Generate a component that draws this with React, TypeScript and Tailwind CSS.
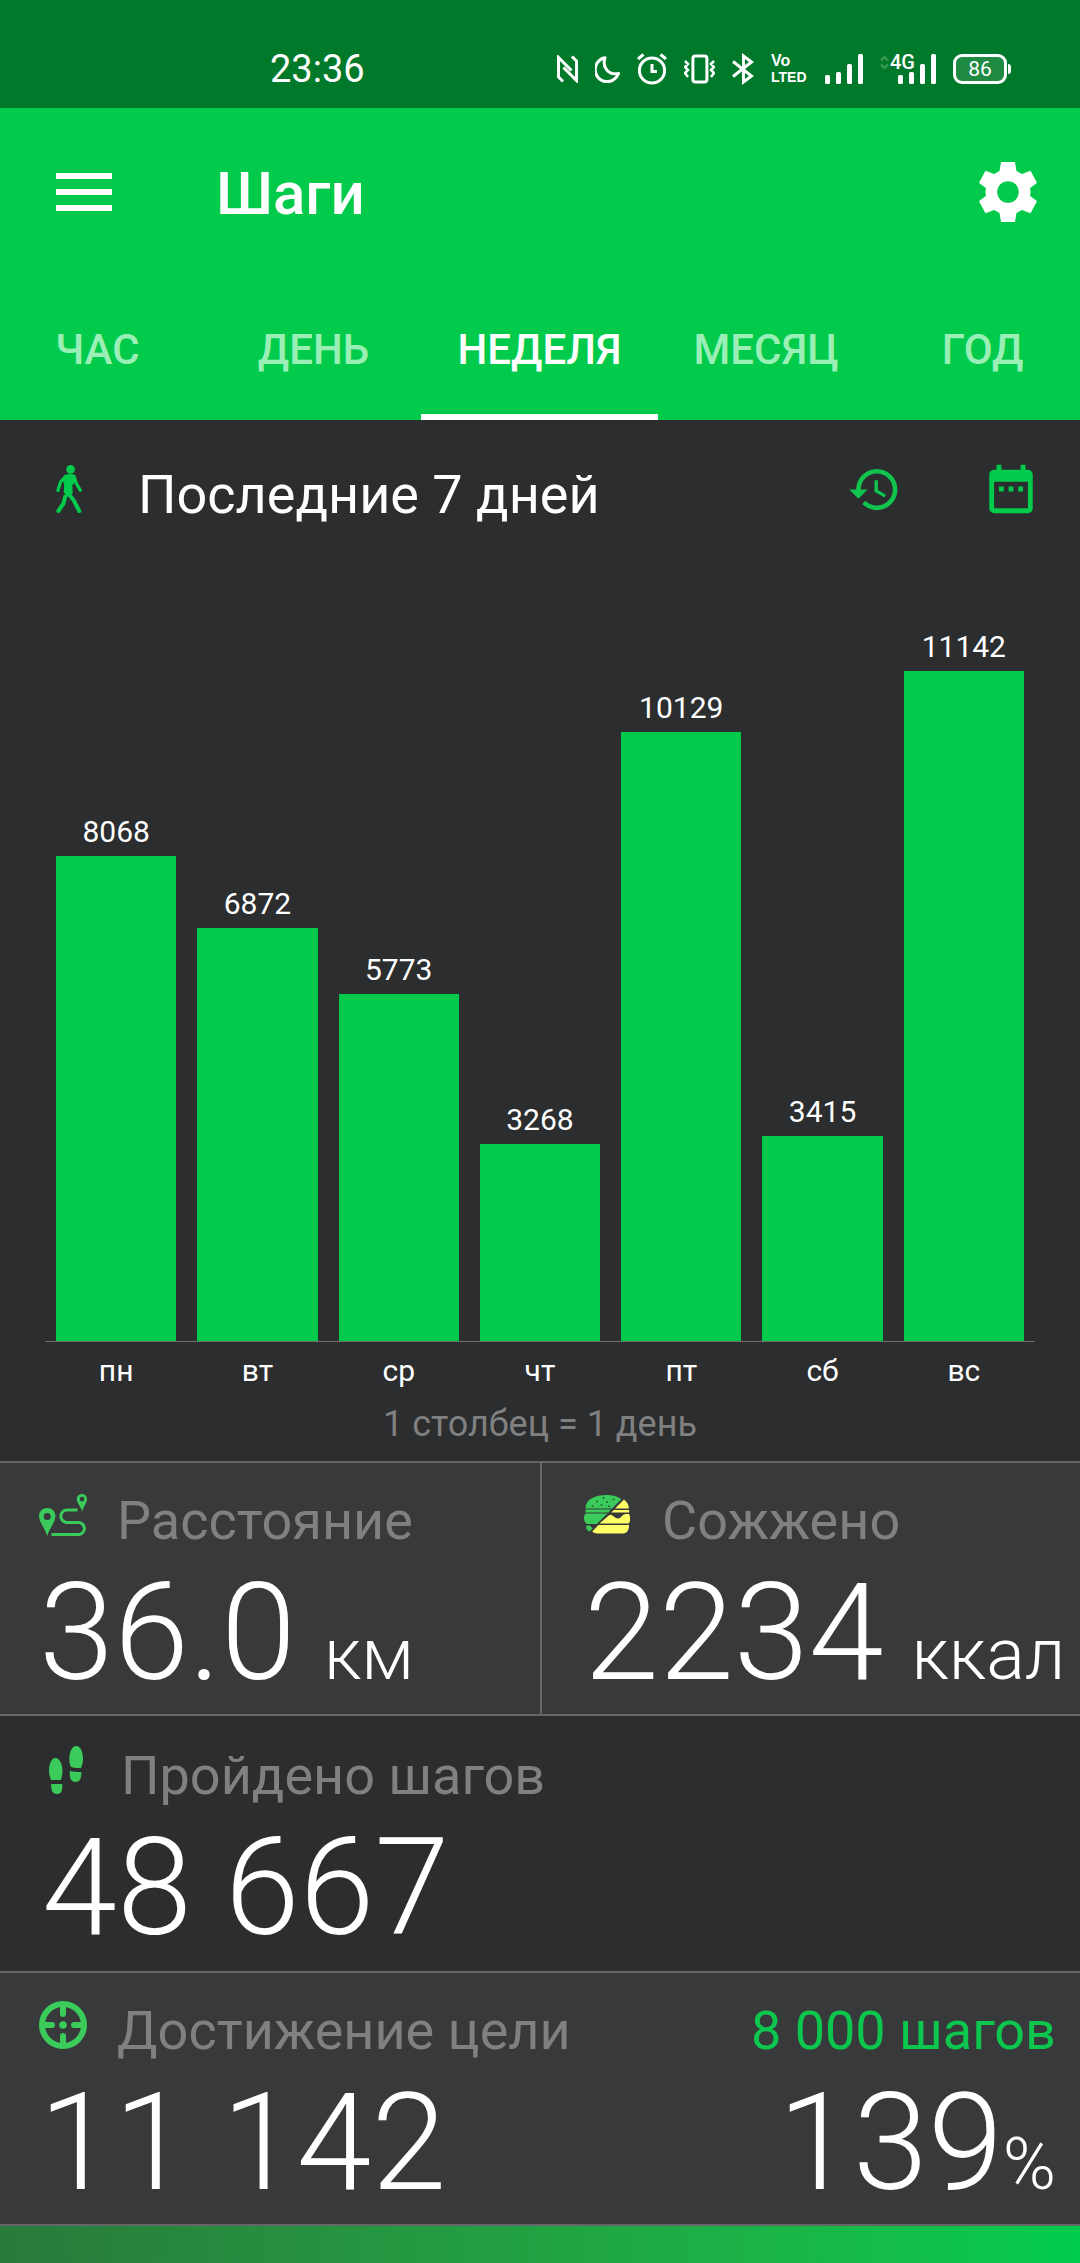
import { MdDateRange, MdHistory } from "react-icons/md";

const tabs = ["ЧАС", "ДЕНЬ", "НЕДЕЛЯ", "МЕСЯЦ", "ГОД"];

const days = [
  { name: "пн", steps: 8068 },
  { name: "вт", steps: 6872 },
  { name: "ср", steps: 5773 },
  { name: "чт", steps: 3268 },
  { name: "пт", steps: 10129 },
  { name: "сб", steps: 3415 },
  { name: "вс", steps: 11142 },
];

const MAX_STEPS = 11142;
const MAX_BAR = 670;

const SignalBars = () => (
  <svg width="38" height="30" viewBox="0 0 38 30" fill="#fff">
    <rect x="0" y="21" width="5" height="9" rx="1.5" />
    <rect x="11" y="18" width="5" height="12" rx="1.5" />
    <rect x="22" y="10" width="5" height="20" rx="1.5" />
    <rect x="33" y="0" width="5" height="30" rx="1.5" />
  </svg>
);

const StatusBar = () => {
  return (
    <div className="flex h-[108px] items-center bg-[#00792b] pt-[30px] pr-[69px] pl-[270px] text-white">
      <span className="text-[38px] leading-[44px]">23:36</span>
      <div className="ml-auto flex items-center gap-[17px]">
        {/* nfc */}
        <svg width="21" height="28" viewBox="0 0 21 28" fill="none" stroke="#fff" strokeWidth="3">
          <path d="M6 26.500L1.500 22V2.500L14.500 15.500" />
          <path d="M15 1.500L19.500 6V25.500L6.500 12.500" />
        </svg>
        {/* do not disturb */}
        <svg width="25" height="27" viewBox="0 0 25 27" fill="none" stroke="#fff" strokeWidth="3" strokeLinejoin="round">
          <path d="M10 1.800A12 12 0 1 0 23.500 17.500C13 19.500 7 11 10 1.800Z" />
        </svg>
        {/* alarm */}
        <svg width="30" height="32" viewBox="0 0 30 32" fill="none" stroke="#fff" strokeWidth="3">
          <circle cx="15" cy="17.500" r="12.600" />
          <path d="M15 11v7.500h5M1 6l5.500-4.500M29 6l-5.500-4.500" />
        </svg>
        {/* vibration */}
        <svg width="31" height="30" viewBox="0 0 31 30" fill="none" stroke="#fff" strokeWidth="3">
          <rect x="8.900" y="1.900" width="14" height="26.200" rx="2.500" />
          <path d="M1 7l3 3-3 3 3 3-3 3 3 4M30 7l-3 3 3 3-3 3 3 3-3 4" strokeWidth="2.500" />
        </svg>
        {/* bluetooth */}
        <svg width="22" height="32" viewBox="0 0 22 32" fill="none" stroke="#fff" strokeWidth="3">
          <path d="M1 8.500l18.500 14.500L11.500 29V3l8 6L1 23.500" />
        </svg>
        <div className="flex w-[37px] flex-col font-['Liberation_Sans',sans-serif] font-bold">
          <span className="text-[16px] leading-[17px]">Vo</span>
          <span className="text-[14px] leading-[17px]">LTED</span>
        </div>
        <SignalBars />
        <div className="flex items-start">
          <svg className="mt-px" width="9" height="15" viewBox="0 0 9 15" fill="none" stroke="#35984f" strokeWidth="2.500">
            <path d="M1 5.500l3.500-3.500L8 5.500M1 9.500L4.500 13L8 9.500" />
          </svg>
          <div className="relative ml-[9px]">
            <SignalBars />
            <span className="absolute -top-1 -left-2 text-[20px] leading-[24px] font-medium">4G</span>
          </div>
        </div>
        {/* battery */}
        <div className="flex items-center gap-px">
          <div className="flex h-[30px] w-[54px] items-center justify-center rounded-[9px] border-3 border-white bg-[#1f8a44] text-[21px] leading-[24px]">
            86
          </div>
          <div className="h-[10px] w-[3px] rounded-r-sm bg-white" />
        </div>
      </div>
    </div>
  );
};

const Header = () => {
  return (
    <header className="bg-[#02cb4b] text-white">
      <div className="flex h-[168px] items-center pr-[42px] pl-14">
        <button aria-label="Меню" className="flex w-14 flex-col gap-[10px]">
          <span className="h-[6px] w-full bg-white" />
          <span className="h-[6px] w-full bg-white" />
          <span className="h-[6px] w-full bg-white" />
        </button>
        <h1 className="ml-[104px] pt-1 text-[60px] leading-[72px] font-medium">Шаги</h1>
        <button aria-label="Настройки" className="ml-auto">
          <svg width="60" height="60" viewBox="-30 -30 60 60" fill="#fff">
            <path
              fillRule="evenodd"
              d="M-7-30H7L8.500-21L14-18L22.500-21.200L29-9.300L22-3.800Q23 0 22 3.800L29 9.300L22.500 21.200L14 18L8.500 21L7 30H-7L-8.500 21L-14 18L-22.500 21.200L-29 9.300L-22 3.800Q-23 0-22-3.800L-29-9.300L-22.500-21.200L-14-18L-8.500-21ZM0-10.800A10.800 10.800 0 1 0 0 10.800A10.800 10.800 0 1 0 0-10.800Z"
            />
          </svg>
        </button>
      </div>
      <nav role="tablist" className="flex h-36 justify-center overflow-hidden">
        {tabs.map((tab) => (
          <button
            key={tab}
            role="tab"
            aria-selected={tab === "НЕДЕЛЯ"}
            className={
              tab === "НЕДЕЛЯ"
                ? "min-w-[216px] shrink-0 border-b-6 border-white px-9 pt-2 text-[42px] font-medium text-white"
                : "min-w-[216px] shrink-0 border-b-6 border-transparent px-9 pt-2 text-[42px] font-medium text-[#9aefb7]"
            }
          >
            {tab}
          </button>
        ))}
      </nav>
    </header>
  );
};

const WeekChart = () => {
  return (
    <section className="bg-[#2b2d2f] pb-4">
      <div className="flex h-[138px] items-center pr-[40px] pl-14">
        <svg width="26" height="48" viewBox="0 0 26 48" fill="none" stroke="#02cb4b" strokeLinecap="round" strokeLinejoin="round">
          <circle cx="14.600" cy="4.400" r="4.300" fill="#02cb4b" stroke="none" />
          <path d="M9.500 10.500Q13.500 9 18 10.500L19 16L15.500 20L16 28L12 31L8.500 27L9 20L7.500 14Z" fill="#02cb4b" strokeWidth="1.500" />
          <path d="M9.500 11.500L4.500 17L1.900 25.500M18.200 11.500L20.500 19L24.300 25.200" strokeWidth="3.200" />
          <path d="M12 28L17.500 35L23.300 46M9.200 31.500L7.500 38.500L2.300 46" strokeWidth="4" />
        </svg>
        <h2 className="ml-14 pt-3 text-[54px] leading-[64px] text-white">Последние 7 дней</h2>
        <button aria-label="История" className="ml-auto">
          <MdHistory className="size-[55px] text-[#10c44e]" />
        </button>
        <button aria-label="Календарь" className="ml-20">
          <MdDateRange className="size-[58px] text-[#02cb4b]" />
        </button>
      </div>

      <div className="mx-[45px] flex h-[784px] items-end gap-[21px] border-b border-[#6c6d6e] px-[11px]">
        {days.map((day) => (
          <div key={day.name} className="flex flex-1 flex-col items-center">
            <span className="mb-[6px] text-[30px] leading-[36px] text-white">{day.steps}</span>
            <div
              className="w-full bg-[#02cb4b]"
              style={{ height: Math.round((day.steps / MAX_STEPS) * MAX_BAR) }}
            />
          </div>
        ))}
      </div>
      <div className="mx-[45px] mt-[9px] flex gap-[21px] px-[11px]">
        {days.map((day) => (
          <span key={day.name} className="flex-1 text-center text-[30px] leading-[40px] text-white">
            {day.name}
          </span>
        ))}
      </div>
      <p className="mt-3 text-center text-[36px] leading-[42px] text-[#808080]">1 столбец = 1 день</p>
    </section>
  );
};

const RouteIcon = () => (
  <svg width="48" height="42" viewBox="0 0 48 42" fill="#3bcb5a">
    <path
      fillRule="evenodd"
      d="M8.200 14C3.500 14 0 17.500 0 22C0 28 6 34 8.200 42C10.500 34 16.400 28 16.400 22C16.400 17.500 13 14 8.200 14ZM8.200 18.900A3.500 3.500 0 1 1 8.200 25.900A3.500 3.500 0 1 1 8.200 18.900Z"
    />
    <path
      fillRule="evenodd"
      d="M43 0C40 0 37.800 2.200 37.800 5C37.800 9 41.600 12 43.200 17.600C44.600 12 48 9 48 5C48 2.200 46 0 43 0ZM43 2.800A2.300 2.300 0 1 1 43 7.400A2.300 2.300 0 1 1 43 2.800Z"
    />
    <path
      d="M38.500 16H28a6.200 6.200 0 0 0 0 12.400H39.300a6.100 6.100 0 0 1 0 12.200H12.500"
      fill="none"
      stroke="#3bcb5a"
      strokeWidth="3"
    />
  </svg>
);

const BurgerIcon = () => (
  <svg width="48" height="42" viewBox="0 0 48 42">
    <g fill="#3bcb5a">
      <path d="M1.500 14.500C1.500 5 11 1 23 1C29 1 34 2.500 37.300 5.200L28 14.500Z" />
      <path d="M1.500 15.600H27L24.400 18.400H1.500Z" />
      <path d="M1.500 19.500H23.300L12.800 30H3C-1 28-.5 21.500 1.500 19.500Z" />
      <path d="M2.500 31.500H6L8.500 34.500L5.500 37.500C3 36.500 1.500 34 2.500 31.500Z" />
    </g>
    <g fill="#ffff66">
      <path d="M31 14.500L40 5.600C43 8 44.800 11 44.800 14.500Z" />
      <path d="M29.800 16H45.200V18.600H27.200Z" />
      <path d="M24.800 21.500C28 19 29.500 24 34 24.500C38 24.500 37.500 20 42 20H45C46.500 22 46.500 28 44.800 29.600H15.500Z" />
      <path d="M14.500 31H45C45 36 43 39.500 38.500 39.500H14C11.500 39.500 9 38.800 8.200 37.500Z" />
    </g>
    <g fill="#25693a">
      <circle cx="19.500" cy="4" r="1" />
      <circle cx="13" cy="7.500" r="1" />
      <circle cx="23" cy="8" r="1" />
      <circle cx="29.500" cy="5.500" r="1" />
      <circle cx="8.500" cy="12" r="1" />
      <circle cx="17.500" cy="11" r="1" />
      <circle cx="25" cy="12.300" r="1" />
    </g>
  </svg>
);

const FootprintsIcon = () => (
  <svg width="49" height="48" viewBox="-7 0 49 48" fill="#3bcb5a">
    <path d="M6.500 12C10.500 12 13.500 18 13.500 25C13.500 29 12.500 32 12 34H2C1 31 0 28.500 0 25C0 18 2.500 12 6.500 12Z" />
    <path d="M2.200 38H13.300C13.800 44 12.500 48 8 48C3.500 48 1.800 44 2.200 38Z" />
    <path d="M27.300 0C31.500 0 34 6 34 13C34 16.500 33 19.500 32 22C28.500 22.200 25 22 22 21C20.800 18.500 20.300 16 20.300 13C20.300 6 23 0 27.300 0Z" />
    <path d="M21 25C24.500 26 28.500 26.300 32.300 26C32.500 32 31 36 26.500 36C22 36 20 31 21 25Z" />
  </svg>
);

const TargetIcon = () => (
  <svg width="48" height="48" viewBox="0 0 48 48" fill="none" stroke="#3bcb5a" strokeWidth="6">
    <circle cx="24" cy="24" r="21" />
    <path d="M24 4v9M24 35v9M4 24h9M35 24h9" strokeLinecap="round" />
    <circle cx="24" cy="24" r="3.800" fill="#3bcb5a" stroke="none" />
  </svg>
);

const Stats = () => {
  return (
    <section className="border-y-2 border-[#656667] text-white">
      <div className="grid grid-cols-2 bg-[#38393b]">
        <div className="pt-[26px] pb-px pl-[39px]">
          <div className="flex gap-[30px]">
            <span className="pt-[5px]"><RouteIcon /></span>
            <h3 className="text-[54px] leading-[64px] text-[#808080]">Расстояние</h3>
          </div>
          <p className="text-[135px] leading-[160px] font-light whitespace-nowrap">
            36.0<span className="ml-7 text-[72px] leading-none">км</span>
          </p>
        </div>
        <div className="border-l-2 border-[#656667] pt-[26px] pb-px pl-[42px]">
          <div className="flex gap-[30px]">
            <span className="pt-[5px]"><BurgerIcon /></span>
            <h3 className="text-[54px] leading-[64px] text-[#808080]">Сожжено</h3>
          </div>
          <p className="text-[135px] leading-[160px] font-light whitespace-nowrap">
            2234<span className="ml-7 text-[72px] leading-none">ккал</span>
          </p>
        </div>
      </div>

      <div className="border-y-2 border-[#656667] bg-[#2b2d2f] pt-7 pb-[3px] pl-[42px]">
        <div className="flex gap-[30px]">
          <span className="pt-[2px]"><FootprintsIcon /></span>
          <h3 className="text-[54px] leading-[64px] text-[#808080]">Пройдено шагов</h3>
        </div>
        <p className="text-[135px] leading-[160px] font-light">48 667</p>
      </div>

      <div className="flex justify-between bg-[#38393b] pt-[26px] pr-6 pb-px pl-[39px]">
        <div>
          <div className="flex gap-[30px]">
            <span className="pt-[2px]"><TargetIcon /></span>
            <h3 className="text-[54px] leading-[64px] text-[#808080]">Достижение цели</h3>
          </div>
          <p className="text-[135px] leading-[160px] font-light">11 142</p>
        </div>
        <div className="text-right">
          <p className="text-[54px] leading-[64px] text-[#0cc64e]">8 000 шагов</p>
          <p className="text-[135px] leading-[160px] font-light">
            139<span className="text-[72px] leading-none">%</span>
          </p>
        </div>
      </div>
    </section>
  );
};

const App = () => {
  return (
    <div className="min-h-screen overflow-hidden bg-[#2b2d2f] font-['Roboto',sans-serif]">
      <StatusBar />
      <Header />
      <main>
        <WeekChart />
        <Stats />
        <div className="h-[37px] bg-linear-to-r from-[#287a3a] to-[#00cc4b]" />
      </main>
    </div>
  );
};

export default App;
